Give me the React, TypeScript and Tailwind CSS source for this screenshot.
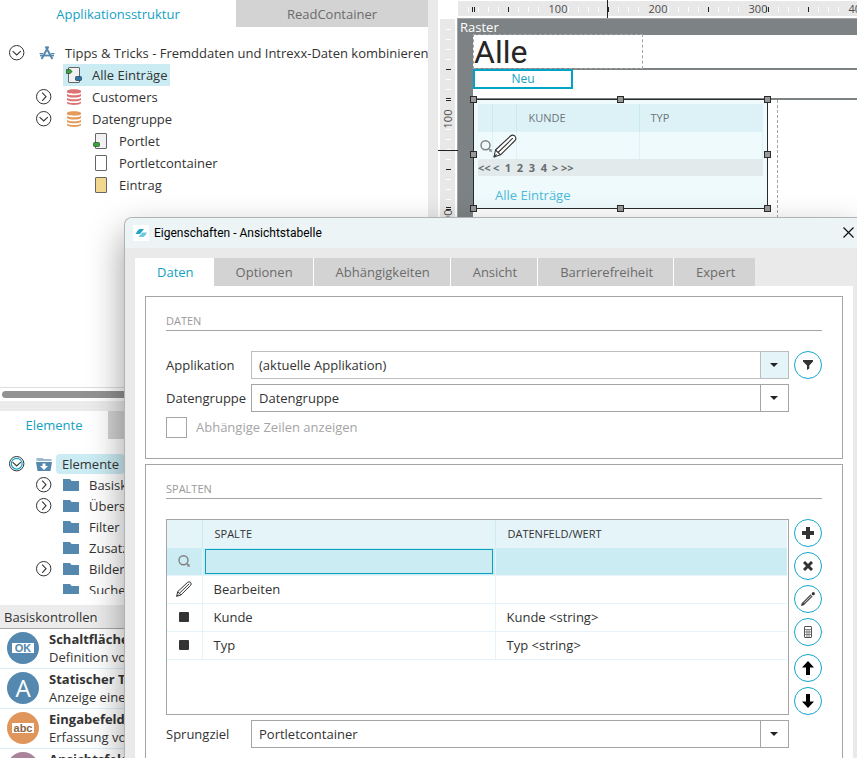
import type { ReactNode } from "react";
import clsx from "clsx";

type TreeNode = {
  label: string;
  level: number;
  icon: ReactNode;
  open?: boolean;
  selected?: boolean;
};

const indent = ["pl-[9px]", "pl-[36px]", "pl-[63px]"];

/* ---------- icons ---------- */

const Toggle = ({ open, active }: { open?: boolean; active?: boolean }) => (
  <svg width="16" height="16" viewBox="0 0 16 16" fill="none">
    <circle cx="7.7" cy="7.7" r="7.2" stroke="#333" strokeWidth="1" />
    {active && <circle cx="7.7" cy="7.7" r="5.4" stroke="#12a5c8" strokeWidth="1.2" />}
    <path
      d={open ? "M3.6 6.2L7.7 10L11.8 6.2" : "M6.2 3.6L10 7.7L6.2 11.8"}
      stroke="#333"
      strokeWidth="1.1"
    />
  </svg>
);

const AppIcon = () => (
  <svg width="16" height="16" viewBox="0 0 16 16" fill="none" stroke="#5488ae">
    <path d="M6.6 1.5L13.4 14M9.4 1.5L2.6 14" strokeWidth="2" />
    <path d="M1 10.5H15" strokeWidth="1.8" />
    <path d="M0.5 8.5H4M12 8.5H15.5" strokeWidth="1" />
  </svg>
);

const PageIcon = ({ fill = "#fff", children }: { fill?: string; children?: ReactNode }) => (
  <svg width="16" height="16" viewBox="0 0 16 16">
    <rect x="2.5" y="0.5" width="11" height="15" rx="0.5" fill={fill} stroke="#666" />
    {children}
  </svg>
);

const StartPageIcon = () => (
  <PageIcon fill="#f1f1f1">
    <path d="M0.5 2.5H4L6.2 4.5L4 6.5H0.5Z" fill="#37a637" stroke="#33533a" strokeWidth="0.8" />
    <rect x="9.5" y="9.5" width="6" height="4" rx="1" fill="#2f74a8" stroke="#27435a" strokeWidth="0.8" />
  </PageIcon>
);

const PortletIcon = () => (
  <PageIcon fill="#f1f1f1">
    <rect x="0.5" y="9.5" width="6" height="4" rx="1" fill="#37a637" stroke="#33533a" strokeWidth="0.8" />
  </PageIcon>
);

const DbIcon = ({ color }: { color: string }) => (
  <svg width="16" height="16" viewBox="0 0 16 16">
    <path
      d="M1 2C1 -0.4 15 -0.4 15 2V3C15 5.2 1 5.2 1 3ZM1 5C3 6.8 13 6.8 15 5V7C13 9 3 9 1 7ZM1 9C3 10.8 13 10.8 15 9V11C13 12.8 3 12.8 1 11ZM1 12.8C3 14.4 13 14.4 15 12.8V14.3C13 16.4 3 16.4 1 14.3Z"
      fill={color}
    />
  </svg>
);

const FolderIcon = () => (
  <svg width="16" height="13" viewBox="0 0 16 13" fill="#5488ae">
    <path d="M0 1H7L8.5 3H16V13H0Z" />
  </svg>
);

const FolderOpenIcon = () => (
  <svg width="16" height="14" viewBox="0 0 16 14">
    <path d="M0.5 4V1H6.5L8 2H15.5V4Z" fill="#9cbbd2" />
    <path d="M0 5H16L14.5 14H1.5Z" fill="#5488ae" />
    <path d="M6.5 6.5H9.5V9H12L8 13L4 9H6.5Z" fill="#fff" />
  </svg>
);

const PencilIcon = ({ size, width }: { size: number; width: number }) => (
  <svg width={size} height={size} viewBox="0 0 24 24" fill="none" stroke="#333" strokeWidth={width} strokeLinejoin="round">
    <path d="M1 23L2.5 16L17.5 2Q19.5 0.3 21.8 2Q23.8 4.4 22 6.5L7.5 20.8Z" fill="#fff" />
    <path d="M2.5 16L7.5 20.8M5 18.5L19.8 4.2M1 23L3.6 20.4" />
  </svg>
);

const SearchIcon = ({ className }: { className?: string }) => (
  <svg className={className} width="12" height="12" viewBox="0 0 12 12" fill="none" stroke="#808080" strokeWidth="1.4">
    <circle cx="5.5" cy="5.2" r="4.5" />
    <path d="M8.2 8.2L11.6 11.6M11 9.2V11H9.2" strokeWidth="1.2" />
  </svg>
);

const Caret = () => (
  <svg width="8" height="4" viewBox="0 0 8 4" fill="#222">
    <path d="M0 0H8L4 4Z" />
  </svg>
);

/* ---------- trees ---------- */

const structure: TreeNode[] = [
  {
    label: "Tipps & Tricks - Fremddaten und Intrexx-Daten kombinieren -",
    level: 0,
    open: true,
    icon: <AppIcon />,
  },
  { label: "Alle Einträge", level: 1, selected: true, icon: <StartPageIcon /> },
  { label: "Customers", level: 1, open: false, icon: <DbIcon color="#dd7272" /> },
  { label: "Datengruppe", level: 1, open: true, icon: <DbIcon color="#e39a5a" /> },
  { label: "Portlet", level: 2, icon: <PortletIcon /> },
  { label: "Portletcontainer", level: 2, icon: <PageIcon /> },
  { label: "Eintrag", level: 2, icon: <PageIcon fill="#f2d88e" /> },
];

const elements: TreeNode[] = [
  { label: "Elemente", level: 0, open: true, selected: true, icon: <FolderOpenIcon /> },
  { label: "Basisko", level: 1, open: false, icon: <FolderIcon /> },
  { label: "Übersicht", level: 1, open: false, icon: <FolderIcon /> },
  { label: "Filter", level: 1, icon: <FolderIcon /> },
  { label: "Zusatz", level: 1, icon: <FolderIcon /> },
  { label: "Bilder", level: 1, open: false, icon: <FolderIcon /> },
  { label: "Suche", level: 1, icon: <FolderIcon /> },
];

const ToggleSlot = ({ node, active }: { node: TreeNode; active?: boolean }) =>
  node.open === undefined ? (
    <span className="w-4 shrink-0" />
  ) : (
    <button type="button" aria-label={node.label} className="w-4 shrink-0">
      <Toggle open={node.open} active={active} />
    </button>
  );

const StructureTree = () => (
  <ul className="pt-[15px]">
    {structure.map((node) => (
      <li key={node.label} className={clsx("flex h-[22px] items-center gap-[11px]", indent[node.level])}>
        <ToggleSlot node={node} />
        <span
          className={clsx(
            "flex h-[22px] items-center gap-[10px] px-[3px] whitespace-nowrap",
            node.selected && "bg-[#cbecf3]"
          )}
        >
          {node.icon}
          <span>{node.label}</span>
        </span>
      </li>
    ))}
  </ul>
);

const ElementTree = () => (
  <ul className="h-[155px] overflow-hidden pt-[14px]">
    {elements.map((node) => (
      <li key={node.label} className={clsx("flex h-[21px] items-center", indent[node.level])}>
        <ToggleSlot node={node} active={node.selected} />
        <span className="ml-[11px] w-4 shrink-0">{node.icon}</span>
        <span
          className={clsx(
            "ml-1 flex h-5 items-center rounded-[4px] px-[6px] whitespace-nowrap",
            node.selected && "bg-[#cbecf3]"
          )}
        >
          {node.label}
        </span>
      </li>
    ))}
  </ul>
);

/* ---------- control list ---------- */

const controls = [
  {
    title: "Schaltfläche",
    text: "Definition von",
    color: "bg-[#5488ae]",
    mark: (
      <span className="w-[22px] bg-white text-center font-['Liberation_Sans',sans-serif] text-[11px] leading-[10px] font-bold text-[#5488ae]">
        OK
      </span>
    ),
  },
  {
    title: "Statischer Text",
    text: "Anzeige eines",
    color: "bg-[#5488ae]",
    mark: <span className="text-2xl leading-8 text-white">A</span>,
  },
  {
    title: "Eingabefeld",
    text: "Erfassung von",
    color: "bg-[#e0965a]",
    mark: (
      <span className="w-[22px] bg-white text-center font-['Liberation_Sans',sans-serif] text-[11px] leading-[10px] font-bold text-[#8a6546]">
        abc
      </span>
    ),
  },
  {
    title: "Ansichtsfeld",
    text: "Anzeige von",
    color: "bg-[#a9849a]",
    mark: null,
  },
];

const ControlList = () => (
  <div className="min-h-0 flex-1 overflow-hidden">
    <h2 className="flex h-6 items-center border-b border-[#a8a8a8] bg-[#ececec] px-1">Basiskontrollen</h2>
    <ul>
      {controls.map((c) => (
        <li key={c.title} className="flex h-10 items-center gap-[10px] border-b border-[#d9f1f6] pb-px pl-[7px]">
          <span className={clsx("flex size-8 shrink-0 items-center justify-center rounded-full", c.color)}>
            {c.mark}
          </span>
          <span className="leading-[18px] whitespace-nowrap">
            <b className="block">{c.title}</b>
            <span className="block">{c.text}</span>
          </span>
        </li>
      ))}
    </ul>
  </div>
);

const Sidebar = () => (
  <aside className="flex w-[428px] shrink-0 flex-col overflow-hidden">
    <div className="flex h-[401px] shrink-0 flex-col">
      <div className="flex h-[27px] shrink-0">
        <button type="button" className="w-[236px] text-[#149fc3]">
          Applikationsstruktur
        </button>
        <button type="button" className="flex-1 bg-[#d3d3d3] text-[#6b6b6b]">
          ReadContainer
        </button>
      </div>
      <div className="flex-1 overflow-hidden">
        <StructureTree />
      </div>
      <div className="border-t border-[#dedede] px-[2px] pt-[3px] pb-[3px]">
        <div className="h-[7px] w-4/5 rounded-full bg-[#929292]" />
      </div>
    </div>
    <div className="h-[10px] shrink-0 bg-[#ebebeb]" />
    <div className="flex h-7 shrink-0">
      <button type="button" className="w-[108px] text-[#149fc3]">
        Elemente
      </button>
      <div className="flex-1 bg-[#d3d3d3]" />
    </div>
    <ElementTree />
    <div className="h-[11px] shrink-0" />
    <ControlList />
  </aside>
);

/* ---------- form designer ---------- */

const ticks = Array.from({ length: 45 }, (_, i) => i * 10);
const isLabel = (t: number) => t > 0 && t % 100 === 0;
const nearLabel = (t: number) => t > 50 && (t % 100 < 10 || t % 100 >= 90);

const HorizontalRuler = () => (
  <svg className="mt-px ml-px h-[15px] w-full bg-[#e8e8e8]" fontSize="11">
    {ticks.slice(1).map((t) =>
      nearLabel(t) ? null : (
        <rect key={t} x={t} y="6" width="1" height="5" fill={t % 100 === 50 ? "#222" : "#fff"} />
      )
    )}
    {[14, 16, 308, 310].map((t) => (
      <rect key={t} x={t} y="6" width="1" height="5" fill="#222" />
    ))}
    {ticks.filter(isLabel).map((t) => (
      <text key={t} x={t} y="12" textAnchor="middle" fill="#4d4d4d">
        {t}
      </text>
    ))}
  </svg>
);

const VerticalRuler = () => (
  <svg className="mt-px ml-[2px] h-full w-[15px] bg-[#e8e8e8]" fontSize="11">
    {ticks.slice(1).map((t) =>
      nearLabel(t) ? null : (
        <rect key={t} x="6" y={t} width="5" height="1" fill={t % 100 === 50 ? "#222" : "#fff"} />
      )
    )}
    {[79, 81, 188, 190].map((t) => (
      <rect key={t} x="6" y={t} width="5" height="1" fill="#222" />
    ))}
    {ticks.filter(isLabel).map((t) => (
      <text key={t} transform={`translate(12 ${t}) rotate(-90)`} textAnchor="middle" fill="#4d4d4d">
        {t}
      </text>
    ))}
  </svg>
);

const handles = [
  "-top-1 -left-1",
  "-top-1 left-[143px]",
  "-top-1 -right-1",
  "top-[51px] -left-1",
  "top-[51px] -right-1",
  "-bottom-1 -left-1",
  "-bottom-1 left-[143px]",
  "-bottom-1 -right-1",
];

const ViewTable = () => (
  <div className="relative -mt-px h-[110px] w-[295px] border border-[#2b2b2b] bg-[#effafd] px-1 pt-1">
    <table className="w-full table-fixed text-left text-[11px] text-[#6f7577]">
      <thead>
        <tr className="h-7 bg-[#dcf2f7]">
          <th className="w-[14px] border-r border-[#c9e9f0]" />
          <th className="w-6 border-r border-[#c9e9f0]" />
          <th className="w-[123px] border-r border-[#c9e9f0] pl-3 font-normal">KUNDE</th>
          <th className="pl-[11px] font-normal">TYP</th>
        </tr>
      </thead>
      <tbody>
        <tr className="h-[27px]">
          <td className="border-r border-[#dcf2f7]">
            <SearchIcon className="ml-[2px]" />
          </td>
          <td className="border-r border-[#dcf2f7]">
            <PencilIcon size={24} width={1.1} />
          </td>
          <td className="border-r border-[#dcf2f7]" />
          <td className="border-r border-[#dcf2f7]" />
        </tr>
      </tbody>
    </table>
    <div className="flex h-[17px] items-center bg-[#e2eaec] text-[11px] font-bold text-[#666c6e]">
      <span className="w-[15px]">&lt;&lt;</span>
      <span className="w-[9px]">&lt;</span>
      {[1, 2, 3, 4].map((n) => (
        <span key={n} className="w-3 text-center">
          {n}
        </span>
      ))}
      <span className="ml-[2px] w-[9px]">&gt;</span>
      <span>&gt;&gt;</span>
    </div>
    <a href="#alle" className="ml-[17px] block leading-[38px] text-[#4cbbd9]">
      Alle Einträge
    </a>
    {handles.map((h) => (
      <span key={h} className={clsx("absolute size-[7px] border border-[#2b2b2b] bg-[#999]", h)} />
    ))}
  </div>
);

const Designer = () => (
  <main className="relative grid min-w-0 flex-1 grid-cols-[19px_1fr] grid-rows-[18px_1fr] overflow-hidden">
    <div />
    <HorizontalRuler />
    <VerticalRuler />
    <div className="flex min-w-0 flex-col border-t border-l border-[#a0a3a4] bg-[#7d8385]">
      <div className="h-4 pl-[2px] leading-4 text-white">Raster</div>
      <div className="ml-[15px] flex flex-1 flex-col bg-white">
        <div className="h-[33px]">
          <h1 className="relative -mt-px h-[35px] w-[170px] border border-dashed border-[#a3a3a3] font-['Roboto',sans-serif] text-[32px] leading-[35px] text-[#262626]">
            Alle
          </h1>
        </div>
        <div className="h-[2px] bg-[#7d8385]" />
        <div className="h-7">
          <button
            type="button"
            className="relative -mt-px block h-5 w-[100px] border-2 border-[#00a3c4] bg-white text-xs leading-4 text-[#149fc3]"
          >
            Neu
          </button>
        </div>
        <div className="h-[2px] bg-[#7d8385]" />
        <div className="w-[305px] flex-1 border-r border-dashed border-[#a3a3a3]">
          <ViewTable />
        </div>
      </div>
    </div>
    <span className="absolute top-0 left-[169px] h-[18px] w-px bg-[#222]" />
    <span className="absolute top-[150px] left-0 h-px w-5 bg-[#222]" />
  </main>
);

/* ---------- properties dialog ---------- */

const tabs = ["Daten", "Optionen", "Abhängigkeiten", "Ansicht", "Barrierefreiheit", "Expert"];

const Combo = ({ id, value, active }: { id: string; value: string; active?: boolean }) => (
  <div className="relative flex-1">
    <select
      id={id}
      className={clsx(
        "block h-7 w-full appearance-none border bg-white pl-[7px] text-[#333]",
        active ? "border-[#bdbdbd]" : "border-[#a5a5a5]"
      )}
    >
      <option>{value}</option>
    </select>
    <span
      className={clsx(
        "pointer-events-none absolute inset-y-px right-px flex w-7 items-center justify-center border-l pr-px",
        active ? "border-[#bdbdbd] bg-[#e5f4f9]" : "border-[#a5a5a5]"
      )}
    >
      <Caret />
    </span>
  </div>
);

const RoundButton = ({ label, children }: { label: string; children: ReactNode }) => (
  <button
    type="button"
    aria-label={label}
    className="flex size-7 shrink-0 items-center justify-center rounded-full border border-[#12a5c8] bg-white"
  >
    {children}
  </button>
);

const Section = ({ title, className, children }: { title: string; className?: string; children: ReactNode }) => (
  <section className={clsx("border border-[#a5a5a5] px-5", className)}>
    <h3 className="mb-5 border-b border-[#a5a5a5] pt-4 pb-[2px] text-[11px] leading-[15px] text-[#999]">
      {title}
    </h3>
    {children}
  </section>
);

const rows = [
  { icon: <PencilIcon size={16} width={1.5} />, name: "Bearbeiten", field: "" },
  { icon: <span className="block size-[10px] rounded-[1px] bg-[#333]" />, name: "Kunde", field: "Kunde <string>" },
  { icon: <span className="block size-[10px] rounded-[1px] bg-[#333]" />, name: "Typ", field: "Typ <string>" },
];

const ColumnTable = () => (
  <div className="h-[196px] flex-1 border border-[#a5a5a5] pr-px">
    <table className="w-full table-fixed text-left">
      <thead>
        <tr className="h-7 bg-[#e5f4f9] text-[11px]">
          <th className="w-[35px] border-r border-[#cbecf3]" />
          <th className="w-[293px] border-r border-[#cbecf3] pl-3 font-normal">SPALTE</th>
          <th className="pl-3 font-normal">DATENFELD/WERT</th>
        </tr>
      </thead>
      <tbody>
        <tr className="h-[27px] border-b border-[#e5f4f9] bg-[#cbecf3]">
          <td className="border-r border-[#e5f4f9]">
            <SearchIcon className="mx-auto" />
          </td>
          <td className="border-r border-[#e5f4f9] px-[2px]">
            <input
              aria-label="Spalte filtern"
              className="block h-[25px] w-full border border-[#0ca0c0] bg-transparent px-2 outline-none"
            />
          </td>
          <td />
        </tr>
        {rows.map((r) => (
          <tr key={r.name} className="h-7 border-b border-[#e5f4f9]">
            <td className="border-r border-[#e5f4f9]">
              <span className="flex justify-center">{r.icon}</span>
            </td>
            <td className="border-r border-[#e5f4f9] pl-[11px]">{r.name}</td>
            <td className="pl-[11px]">{r.field}</td>
          </tr>
        ))}
      </tbody>
    </table>
  </div>
);

const ColumnButtons = () => (
  <div className="flex flex-col gap-[5px]">
    <RoundButton label="Hinzufügen">
      <svg width="12" height="12" viewBox="0 0 12 12" fill="#333">
        <path d="M4 0H8V4H12V8H8V12H4V8H0V4H4Z" />
      </svg>
    </RoundButton>
    <RoundButton label="Entfernen">
      <svg width="10" height="10" viewBox="0 0 10 10" stroke="#333" strokeWidth="3">
        <path d="M1 1L9 9M9 1L1 9" />
      </svg>
    </RoundButton>
    <RoundButton label="Bearbeiten">
      <svg width="14" height="14" viewBox="0 0 14 14">
        <path d="M2 12L10.6 3.4" stroke="#555" strokeWidth="3" />
        <path d="M3.4 10.6L10.4 3.6" stroke="#ccc" strokeWidth="0.9" />
        <path d="M0 14L1 10.6L3.4 13Z" fill="#333" />
        <circle cx="12.3" cy="1.7" r="1.6" fill="#333" />
      </svg>
    </RoundButton>
    <RoundButton label="Berechnen">
      <svg width="8" height="12" viewBox="0 0 8 12">
        <rect x="0.5" y="0.5" width="7" height="11" rx="0.5" fill="#fff" stroke="#555" />
        <path d="M1 3.5H7M1 6H7M1 8.5H7M3 4V11M5 4V11" stroke="#777" strokeWidth="0.9" />
      </svg>
    </RoundButton>
    <div className="mt-[3px] flex flex-col gap-[5px]">
      <RoundButton label="Nach oben">
        <svg width="12" height="14" viewBox="0 0 12 14">
          <path d="M6 0L12 6.5H8V14H4V6.5H0Z" />
        </svg>
      </RoundButton>
      <RoundButton label="Nach unten">
        <svg width="12" height="14" viewBox="0 0 12 14">
          <path d="M6 14L0 7.5H4V0H8V7.5H12Z" />
        </svg>
      </RoundButton>
    </div>
  </div>
);

const PropertiesDialog = () => (
  <div
    role="dialog"
    aria-label="Eigenschaften - Ansichtstabelle"
    className="absolute top-[217px] right-0 bottom-0 left-[124px] flex flex-col overflow-hidden rounded-tl-lg border-t border-l border-[#b0b3b4] bg-[#eaeaea] shadow-[0_16px_36px_rgba(0,0,0,0.4)]"
  >
    <header className="flex h-[30px] shrink-0 items-center bg-[#ecf4f6] pr-[3px] pb-px pl-2">
      <svg width="16" height="16" viewBox="0 0 16 16" className="bg-white">
        <path d="M6.5 4H11L7 9H2.5Q4.5 5 6.5 4Z" fill="#22a5c6" />
        <path d="M9.5 7.5H14Q12.5 11 10.5 12H5.5Z" fill="#6cc8dc" />
      </svg>
      <h2 className="ml-[5px] flex-1 font-['Roboto',sans-serif] text-xs text-black">
        Eigenschaften - Ansichtstabelle
      </h2>
      <button type="button" aria-label="Schließen">
        <svg width="11" height="11" viewBox="0 0 11 11" stroke="#111" strokeWidth="1.2">
          <path d="M0.5 0.5L10.5 10.5M10.5 0.5L0.5 10.5" />
        </svg>
      </button>
    </header>
    <nav className="mt-[10px] ml-[10px] flex h-7 shrink-0">
      {tabs.map((t, i) => (
        <button
          key={t}
          type="button"
          className={clsx(
            i === 0 ? "bg-white pr-5 pl-[22px] text-[#149fc3]" : "bg-[#d3d3d3] pr-5 pl-[22px] text-[#6b6b6b]",
            i > 1 && "border-l border-white"
          )}
        >
          {t}
        </button>
      ))}
    </nav>
    <div className="mr-1 ml-[10px] flex min-h-0 flex-1 flex-col bg-white px-[10px] pt-[10px]">
      <Section title="DATEN" className="pb-5">
        <div className="flex flex-col gap-[5px]">
          <div className="flex items-center">
            <label htmlFor="applikation" className="w-[85px]">
              Applikation
            </label>
            <Combo id="applikation" value="(aktuelle Applikation)" active />
            <div className="ml-[5px]">
              <RoundButton label="Filter">
                <svg width="10" height="10" viewBox="0 0 10 10" fill="#333">
                  <path d="M0 0H10V1.5L6.3 5.5V8.5L4 10V5.5L0 1.5Z" />
                </svg>
              </RoundButton>
            </div>
          </div>
          <div className="flex items-center pr-[33px]">
            <label htmlFor="datengruppe" className="w-[85px]">
              Datengruppe
            </label>
            <Combo id="datengruppe" value="Datengruppe" />
          </div>
          <label className="flex items-center gap-[9px] text-[#a5a5a5]">
            <input type="checkbox" disabled className="size-[21px] appearance-none border border-[#a5a5a5] bg-white" />
            <span className="pb-[2px]">Abhängige Zeilen anzeigen</span>
          </label>
        </div>
      </Section>
      <Section title="SPALTEN" className="mt-[5px] min-h-0 flex-1 border-b-0">
        <div className="flex gap-[5px]">
          <ColumnTable />
          <ColumnButtons />
        </div>
        <div className="mt-[5px] flex items-center pr-[33px]">
          <label htmlFor="sprungziel" className="w-[85px]">
            Sprungziel
          </label>
          <Combo id="sprungziel" value="Portletcontainer" />
        </div>
      </Section>
    </div>
  </div>
);

const App = () => {
  return (
    <div className="relative flex h-screen overflow-hidden bg-white font-['Open_Sans','Noto_Sans',sans-serif] text-[13px] leading-[18px] text-[#333]">
      <Sidebar />
      <div className="w-[10px] shrink-0 bg-[#eaeaea]" />
      <Designer />
      <PropertiesDialog />
    </div>
  );
};

export default App;
